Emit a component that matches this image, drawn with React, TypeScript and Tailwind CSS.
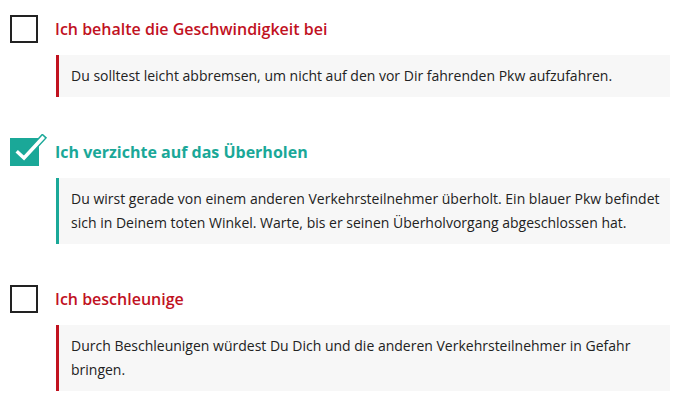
import React from "react";

type Item = {
  title: string;
  text: string;
  checked: boolean;
};

const items: Item[] = [
  {
    title: "Ich behalte die Geschwindigkeit bei",
    text: "Du solltest leicht abbremsen, um nicht auf den vor Dir fahrenden Pkw aufzufahren.",
    checked: false,
  },
  {
    title: "Ich verzichte auf das Überholen",
    text: "Du wirst gerade von einem anderen Verkehrsteilnehmer überholt. Ein blauer Pkw befindet sich in Deinem toten Winkel. Warte, bis er seinen Überholvorgang abgeschlossen hat.",
    checked: true,
  },
  {
    title: "Ich beschleunige",
    text: "Durch Beschleunigen würdest Du Dich und die anderen Verkehrsteilnehmer in Gefahr bringen.",
    checked: false,
  },
];

function CheckBox({ checked }: { checked: boolean }) {
  if (!checked) {
    return <div className="w-[28px] h-[28px] border-2 border-[#222222] bg-white shrink-0" />;
  }
  return (
    <div className="relative w-[29px] h-[28px] bg-[#1aa898] shrink-0">
      <svg
        className="absolute left-0 top-[-4px]"
        width="38"
        height="34"
        viewBox="0 0 38 34"
        fill="none"
      >
        <path
          d="M8 18.5 L14 24 L32.5 4"
          stroke="#1aa898"
          strokeWidth="6.5"
          strokeLinecap="square"
        />
        <path
          d="M8 18.5 L14 24 L32.5 4"
          stroke="#ffffff"
          strokeWidth="3.5"
          strokeLinecap="square"
        />
      </svg>
    </div>
  );
}

export default function App() {
  return (
    <div
      className="w-[683px] h-[402px] bg-white pt-[15px] pl-[10px] pr-[13px] overflow-hidden"
      style={{ fontFamily: '"Open Sans", sans-serif' }}
    >
      <div className="flex flex-col gap-[41px]">
        {items.map((it, i) => (
          <div key={i} className="flex flex-col">
            <div className="flex items-center gap-[17px] h-[28px]">
              <CheckBox checked={it.checked} />
              <span
                className={
                  it.checked
                    ? "text-[16px] font-bold text-[#1aa898] leading-[28px] -ml-[1px]"
                    : "text-[16px] font-semibold text-[#c1121f] leading-[28px]"
                }
              >
                {it.title}
              </span>
            </div>
            <div
              className={
                it.checked
                  ? "ml-[46px] mt-[12px] border-l-[3px] border-[#1aa898] bg-[#f7f7f7] pl-[12px] pr-[4px] py-[9px] text-[14px] leading-[24px] text-[#222222]"
                  : "ml-[46px] mt-[12px] border-l-[3px] border-[#c1121f] bg-[#f7f7f7] pl-[12px] pr-[4px] py-[9px] text-[14px] leading-[24px] text-[#222222]"
              }
            >
              {it.text}
            </div>
          </div>
        ))}
      </div>
    </div>
  );
}
